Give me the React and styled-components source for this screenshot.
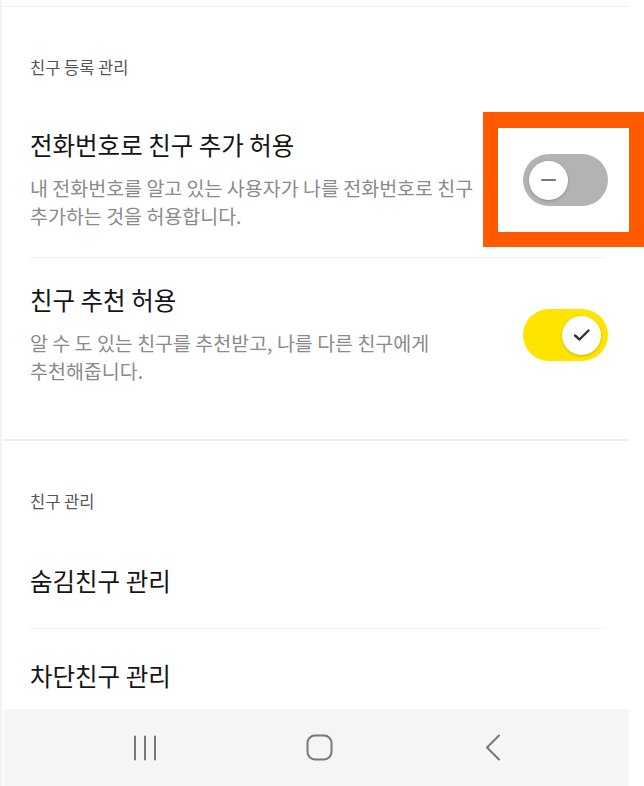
import React from 'react';
import styled, { createGlobalStyle } from 'styled-components';

const GlobalStyle = createGlobalStyle`
  html, body {
    margin: 0;
    padding: 0;
    background: #fff;
  }
  body {
    font-family: "Noto Sans CJK KR", "Noto Sans", sans-serif;
    -webkit-font-smoothing: antialiased;
  }
`;

const Screen = styled.div`
  position: relative;
  width: 644px;
  height: 786px;
  overflow: hidden;
  background: #fff;
`;

const Phone = styled.div`
  width: 627px;
  height: 100%;
  border-left: 2px solid #f2f2f2;
  display: flex;
  flex-direction: column;
`;

const Content = styled.div`
  flex: 1;
  overflow: hidden;
  padding-top: 6px;
`;

const Section = styled.section`
  border-top: ${(p) => (p.thick ? '2px' : '1px')} solid #efefef;
  padding-bottom: ${(p) => p.bottom || 0}px;
`;

const SectionLabel = styled.div`
  padding: 50px 28px ${(p) => p.bottom || 26}px;
  font-size: 16.5px;
  line-height: 20px;
  color: #555;
`;

const Row = styled.div`
  margin: 0 25px 0 28px;
  padding: ${(p) => p.pad || '27px 0'};
  display: flex;
  align-items: center;
  gap: 16px;
  border-bottom: ${(p) => (p.last ? 'none' : '1px solid #f0f0f0')};
`;

const RowText = styled.div`
  flex: 1;
  min-width: 0;
`;

const Title = styled.div`
  font-size: 24.5px;
  line-height: 30px;
  color: #151515;
`;

const Desc = styled.div`
  margin-top: 14px;
  font-size: 19.5px;
  line-height: 28px;
  color: #8a8a8a;
  white-space: nowrap;
`;

const Track = styled.div`
  flex: none;
  width: 85px;
  height: 52px;
  border-radius: 26px;
  margin-right: -4px;
  box-sizing: border-box;
  padding: 0 7px 0 6px;
  background: ${(p) => (p.on ? '#fee500' : '#b3b3b3')};
  display: flex;
  align-items: center;
  justify-content: ${(p) => (p.on ? 'flex-end' : 'flex-start')};
`;

const Knob = styled.div`
  width: 39px;
  height: 39px;
  border-radius: 50%;
  background: #fff;
  box-shadow: 0 1px 3px rgba(0, 0, 0, 0.22);
  display: flex;
  align-items: center;
  justify-content: center;
`;

const Minus = styled.div`
  width: 15px;
  height: 2px;
  border-radius: 1px;
  background: #7a7a7a;
`;

const NavBar = styled.nav`
  flex: none;
  height: 77px;
  margin-left: 2px;
  background: #f5f5f7;
  display: flex;
  align-items: center;
  justify-content: center;
  gap: 149px;
`;

const NavIcon = styled.svg`
  display: block;
  color: #777;
  margin-left: ${(p) => p.shift || 0}px;
`;

const Highlight = styled.div`
  position: absolute;
  left: 483px;
  top: 112px;
  width: 161px;
  height: 135px;
  box-sizing: border-box;
  border: 15px solid #ff5a00;
  border-top-width: 16px;
  pointer-events: none;
`;

const Toggle = ({ on }) => (
  <Track on={on ? 1 : 0}>
    <Knob>
      {on ? (
        <svg width="18" height="14" viewBox="0 0 18 14">
          <path d="M2 7.5 L6.5 11.5 L15.5 2.5" fill="none" stroke="#333" strokeWidth="2.4" strokeLinecap="round" strokeLinejoin="round" />
        </svg>
      ) : (
        <Minus />
      )}
    </Knob>
  </Track>
);

export default function App() {
  return (
    <Screen>
      <GlobalStyle />
      <Phone>
        <Content>
          <Section bottom={27}>
            <SectionLabel>친구 등록 관리</SectionLabel>
            <Row>
              <RowText>
                <Title>전화번호로 친구 추가 허용</Title>
                <Desc>내 전화번호를 알고 있는 사용자가 나를 전화번호로 친구<br />추가하는 것을 허용합니다.</Desc>
              </RowText>
              <Toggle on={false} />
            </Row>
            <Row last>
              <RowText>
                <Title>친구 추천 허용</Title>
                <Desc>알 수 도 있는 친구를 추천받고, 나를 다른 친구에게<br />추천해줍니다.</Desc>
              </RowText>
              <Toggle on />
            </Row>
          </Section>
          <Section thick>
            <SectionLabel bottom={24}>친구 관리</SectionLabel>
            <Row pad="31px 0 32px">
              <Title>숨김친구 관리</Title>
            </Row>
            <Row pad="32px 0" last>
              <Title>차단친구 관리</Title>
            </Row>
          </Section>
        </Content>
        <NavBar>
          <NavIcon width="24" height="26" viewBox="0 0 24 26">
            <path d="M2 1.5V24.5M12 1.5V24.5M22 1.5V24.5" stroke="currentColor" strokeWidth="2" strokeLinecap="round" />
          </NavIcon>
          <NavIcon width="27" height="27" viewBox="0 0 27 27">
            <rect x="1.5" y="1.5" width="24" height="24" rx="7.5" fill="none" stroke="currentColor" strokeWidth="2" />
          </NavIcon>
          <NavIcon width="16" height="27" viewBox="0 0 16 27" shift={3}>
            <path d="M14 1.5L2 13.5L14 25.5" fill="none" stroke="currentColor" strokeWidth="2" strokeLinecap="round" strokeLinejoin="round" />
          </NavIcon>
        </NavBar>
      </Phone>
      <Highlight />
    </Screen>
  );
}
